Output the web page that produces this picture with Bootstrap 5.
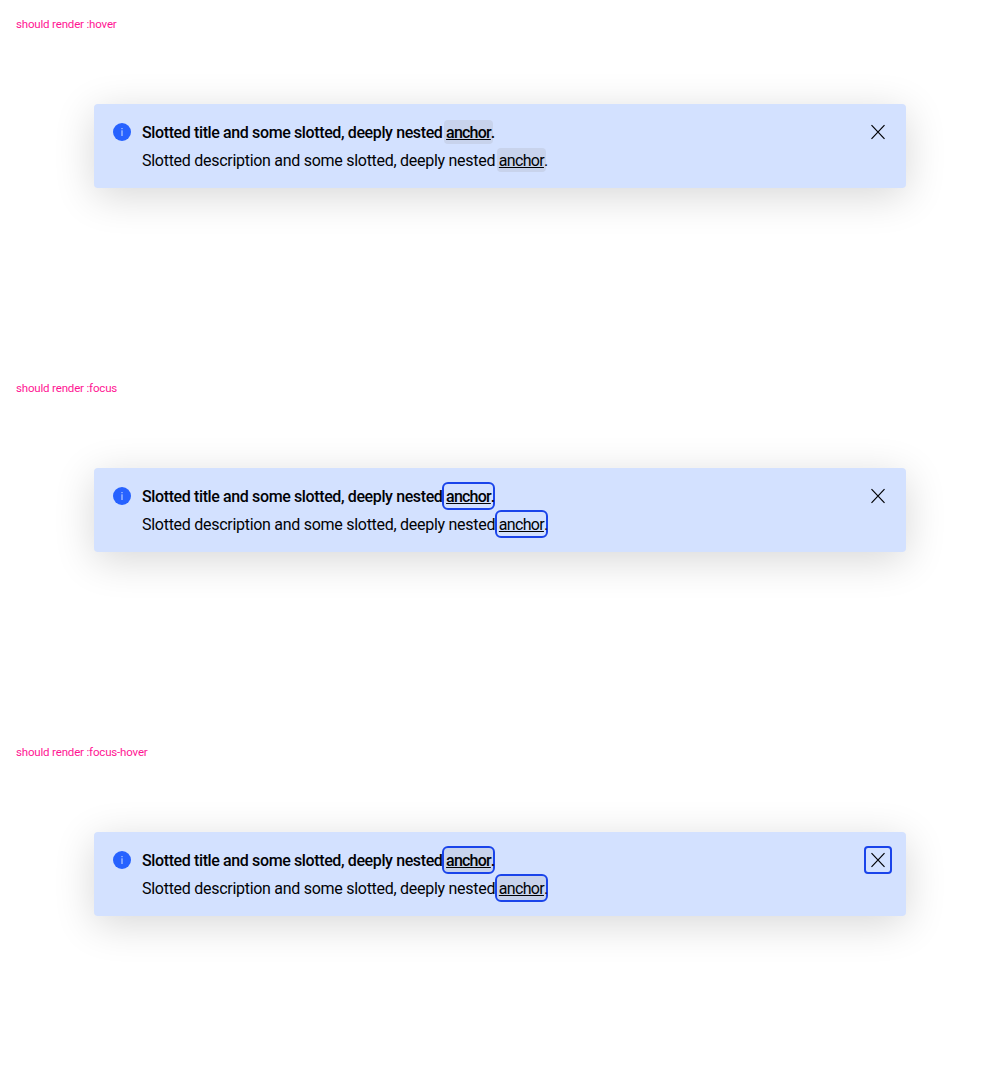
<!DOCTYPE html>
<html lang="en">
<head>
<meta charset="utf-8">
<meta name="viewport" content="width=device-width, initial-scale=1">
<title>Banner states</title>
<link href="https://cdn.jsdelivr.net/npm/bootstrap@5.3.0/dist/css/bootstrap.min.css" rel="stylesheet">
<style>
body{font-family:Roboto,"Liberation Sans",sans-serif;color:#010205;background:#fff}
.state{height:364px;padding:16px 16px 0}
.state-label{font-size:11.5px;line-height:17px;letter-spacing:-.17px;color:#ff1493;margin:0 0 71px}
.notice{width:812px;height:84px;border-radius:4px;background:#d3e1ff;box-shadow:0 8px 40px rgba(0,0,0,.16);font-size:16px}
.notice-title,.notice-text{font-size:16px;line-height:26px;letter-spacing:-.28px;margin:0 0 2px}
.notice-title{font-weight:500;letter-spacing:-.38px}
.notice-icon{width:24px;height:24px}
.notice-link{display:inline-block;line-height:22px;color:inherit;text-decoration:underline;text-underline-offset:1px;padding:2px 2px 0;margin:0 -2px;border-radius:4px;letter-spacing:-.7px}
.notice-title .notice-link{letter-spacing:-.8px}
.notice-close{width:24px;height:24px;border-radius:2px;border:0;background:none;color:#010205}
.is-hover .notice-link{background:rgba(148,149,152,.18)}
.is-focus .notice-link,.is-focus.is-hover .notice-close{outline:2px solid #1a44ea}
</style>
<script src="https://cdn.jsdelivr.net/npm/bootstrap@5.3.0/dist/js/bootstrap.bundle.min.js"></script>
</head>
<body>
<section class="state is-hover">
<p class="state-label">should render :hover</p>
<div class="notice d-flex align-items-start gap-2 p-3 mx-auto">
<svg class="notice-icon flex-shrink-0" viewBox="0 0 24 24"><circle cx="12" cy="12" r="9" fill="#2762ff"/><path d="M12 10.3v5.7M12 8v1.2" stroke="#d3e1ff" stroke-width="1"/></svg>
<div class="flex-grow-1"><h2 class="notice-title">Slotted title and some slotted, deeply nested <a class="notice-link" href="#">anchor</a>.</h2><p class="notice-text mb-0">Slotted description and some slotted, deeply nested <a class="notice-link" href="#">anchor</a>.</p></div>
<button class="notice-close p-0 d-flex" type="button" aria-label="Close"><svg width="24" height="24" viewBox="0 0 24 24" fill="none" stroke="currentColor" stroke-width="1.2"><path d="M5.5 5.2 18.5 18.8M18.5 5.2 5.5 18.8"/></svg></button>
</div>
</section>
<section class="state is-focus">
<p class="state-label">should render :focus</p>
<div class="notice d-flex align-items-start gap-2 p-3 mx-auto">
<svg class="notice-icon flex-shrink-0" viewBox="0 0 24 24"><circle cx="12" cy="12" r="9" fill="#2762ff"/><path d="M12 10.3v5.7M12 8v1.2" stroke="#d3e1ff" stroke-width="1"/></svg>
<div class="flex-grow-1"><h2 class="notice-title">Slotted title and some slotted, deeply nested <a class="notice-link" href="#">anchor</a>.</h2><p class="notice-text mb-0">Slotted description and some slotted, deeply nested <a class="notice-link" href="#">anchor</a>.</p></div>
<button class="notice-close p-0 d-flex" type="button" aria-label="Close"><svg width="24" height="24" viewBox="0 0 24 24" fill="none" stroke="currentColor" stroke-width="1.2"><path d="M5.5 5.2 18.5 18.8M18.5 5.2 5.5 18.8"/></svg></button>
</div>
</section>
<section class="state is-focus is-hover">
<p class="state-label">should render :focus-hover</p>
<div class="notice d-flex align-items-start gap-2 p-3 mx-auto">
<svg class="notice-icon flex-shrink-0" viewBox="0 0 24 24"><circle cx="12" cy="12" r="9" fill="#2762ff"/><path d="M12 10.3v5.7M12 8v1.2" stroke="#d3e1ff" stroke-width="1"/></svg>
<div class="flex-grow-1"><h2 class="notice-title">Slotted title and some slotted, deeply nested <a class="notice-link" href="#">anchor</a>.</h2><p class="notice-text mb-0">Slotted description and some slotted, deeply nested <a class="notice-link" href="#">anchor</a>.</p></div>
<button class="notice-close p-0 d-flex" type="button" aria-label="Close"><svg width="24" height="24" viewBox="0 0 24 24" fill="none" stroke="currentColor" stroke-width="1.2"><path d="M5.5 5.2 18.5 18.8M18.5 5.2 5.5 18.8"/></svg></button>
</div>
</section>
</body>
</html>
